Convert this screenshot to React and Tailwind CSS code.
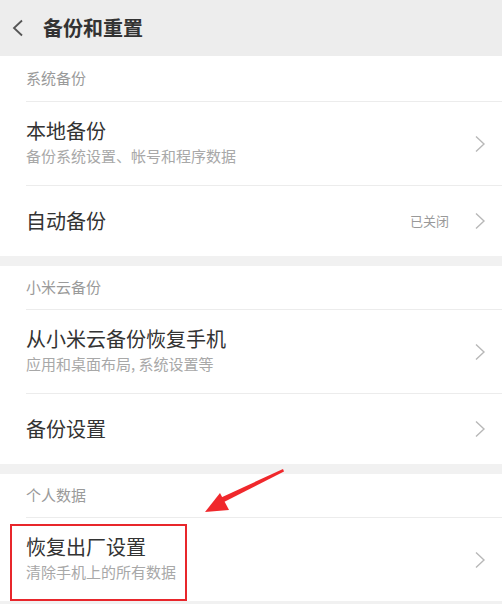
import React from 'react';

const font = { fontFamily: '"Noto Sans CJK SC", "Noto Sans", sans-serif' };

function Chevron() {
  return (
    <svg width="12" height="18" viewBox="0 0 12 18" className="shrink-0">
      <polyline points="2,1.5 10,9 2,16.5" fill="none" stroke="#b8b8b8" strokeWidth="1.4" />
    </svg>
  );
}

function SectionHeader({ title, first }) {
  return (
    <div className={`flex items-center pl-[26px] text-[15px] text-[#9a9a9a] ${first ? 'h-[45px]' : 'h-[43px]'}`}>
      {title}
    </div>
  );
}

function Divider() {
  return <div className="ml-[26px] h-px bg-[#ececec]" />;
}

function Row({ title, sub, value }) {
  if (sub) {
    return (
      <div className="flex h-[83px] items-center pl-[26px] pr-[16px]">
        <div className="flex-1 pb-[2px]">
          <div className="text-[20px] leading-[26px] text-[#333]">{title}</div>
          <div className="text-[15px] leading-[24px] text-[#a8a8a8]">{sub}</div>
        </div>
        <Chevron />
      </div>
    );
  }
  return (
    <div className="flex h-[70px] items-center pl-[26px] pr-[16px]">
      <div className="flex-1 text-[20px] text-[#333]">{title}</div>
      {value && <span className="mr-[25px] text-[13px] text-[#999]">{value}</span>}
      <Chevron />
    </div>
  );
}

export default function App() {
  return (
    <div className="relative h-[604px] w-[502px] overflow-hidden bg-[#f1f1f1]" style={font}>
      {/* Header */}
      <header className="flex h-[56px] items-center bg-[#ededed]">
        <svg width="12" height="18" viewBox="0 0 12 18" className="ml-[12px]">
          <polyline points="10,1.5 2,9 10,16.5" fill="none" stroke="#555" strokeWidth="1.8" />
        </svg>
        <h1 className="ml-[19px] text-[20px] font-bold text-[#333]">备份和重置</h1>
      </header>

      {/* 系统备份 */}
      <section className="bg-white">
        <SectionHeader title="系统备份" first />
        <Divider />
        <Row title="本地备份" sub="备份系统设置、帐号和程序数据" />
        <Divider />
        <Row title="自动备份" value="已关闭" />
      </section>

      <div className="h-[10px]" />

      {/* 小米云备份 */}
      <section className="bg-white">
        <SectionHeader title="小米云备份" />
        <Divider />
        <Row title="从小米云备份恢复手机" sub="应用和桌面布局, 系统设置等" />
        <Divider />
        <Row title="备份设置" />
      </section>

      <div className="h-[10px]" />

      {/* 个人数据 */}
      <section className="bg-white">
        <SectionHeader title="个人数据" />
        <Divider />
        <div className="relative">
          <Row title="恢复出厂设置" sub="清除手机上的所有数据" />
          <div className="absolute left-[10px] top-[6px] h-[77px] w-[177px] border-2 border-[#e8262b]" />
        </div>
      </section>

      {/* Annotation arrow */}
      <svg className="pointer-events-none absolute left-0 top-0" width="502" height="604">
        <polygon points="283,469 284,471.5 222,503 219,498.5" fill="#f0282c" />
        <polygon points="205,512 220,493 229,510" fill="#f0282c" />
      </svg>
    </div>
  );
}
